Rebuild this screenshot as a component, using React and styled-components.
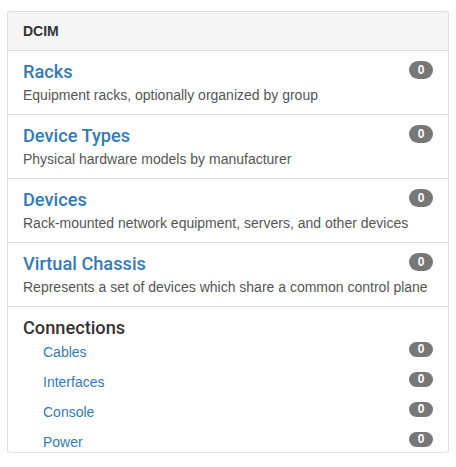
import React from 'react'
import styled, { createGlobalStyle } from 'styled-components'

const GlobalStyle = createGlobalStyle`
    body {
        margin: 0;
        background: #fff;
        font-family: "Liberation Sans", Arial, sans-serif;
        font-size: 14px;
        color: #333;
    }
`;

const Page = styled.div`
    padding: 11px 7px 0;
`;

const Panel = styled.div`
    width: 442px;
    box-sizing: border-box;
    border: 1px solid #ddd;
    border-bottom-color: #e3e3e3;
    border-radius: 4px;
    background: #fff;
    box-shadow: 0 1px 1px rgba(0, 0, 0, 0.05);
`;

const PanelHeading = styled.div`
    padding: 10px 15px;
    line-height: 18px;
    background: #f5f5f5;
    border-bottom: 1px solid #ddd;
    border-radius: 3px 3px 0 0;
    font-weight: bold;
    color: #333;
`;

const Item = styled.div`
    padding: ${({ $last }) => ($last ? '10px 15px 0' : '10px 15px')};
    border-bottom: ${({ $last }) => ($last ? 'none' : '1px solid #ddd')};
`;

const Heading = styled.h4`
    margin: 0 0 5px;
    padding-top: 1px;
    height: 18.8px;
    font-family: Roboto, "Liberation Sans", sans-serif;
    font-size: 18.2px;
    font-weight: 500;
    line-height: 20px;
    color: #333;

    a {
        color: #337ab7;
        text-decoration: none;
    }
`;

const Text = styled.p`
    margin: 0;
    line-height: 1.3;
    color: #555;
`;

const Badge = styled.span`
    float: right;
    min-width: 10px;
    padding: ${({ $small }) => ($small ? '1.5px 7px' : '3px 7px')};
    font-size: 12px;
    font-weight: bold;
    line-height: 1;
    color: #fff;
    text-align: center;
    background: #777;
    border-radius: 10px;
`;

const SubLink = styled.p`
    margin: 0;
    padding-left: 20px;
    height: ${({ $last }) => ($last ? '20px' : '30px')};
    line-height: 20px;

    a {
        color: #337ab7;
        text-decoration: none;
    }
`;

const models = [
    { name: 'Racks', text: 'Equipment racks, optionally organized by group' },
    { name: 'Device Types', text: 'Physical hardware models by manufacturer' },
    { name: 'Devices', text: 'Rack-mounted network equipment, servers, and other devices' },
    { name: 'Virtual Chassis', text: 'Represents a set of devices which share a common control plane' },
];

const connections = ['Cables', 'Interfaces', 'Console', 'Power'];

const App = () => {
    return (
        <Page>
            <GlobalStyle />
            <Panel>
                <PanelHeading>DCIM</PanelHeading>
                {models.map((m) => (
                    <Item key={m.name}>
                        <Badge>0</Badge>
                        <Heading><a href="#">{m.name}</a></Heading>
                        <Text>{m.text}</Text>
                    </Item>
                ))}
                <Item $last>
                    <Heading>Connections</Heading>
                    {connections.map((c, i) => (
                        <SubLink key={c} $last={i === connections.length - 1}>
                            <Badge $small>0</Badge>
                            <a href="#">{c}</a>
                        </SubLink>
                    ))}
                </Item>
            </Panel>
        </Page>
    )
}

export default App
